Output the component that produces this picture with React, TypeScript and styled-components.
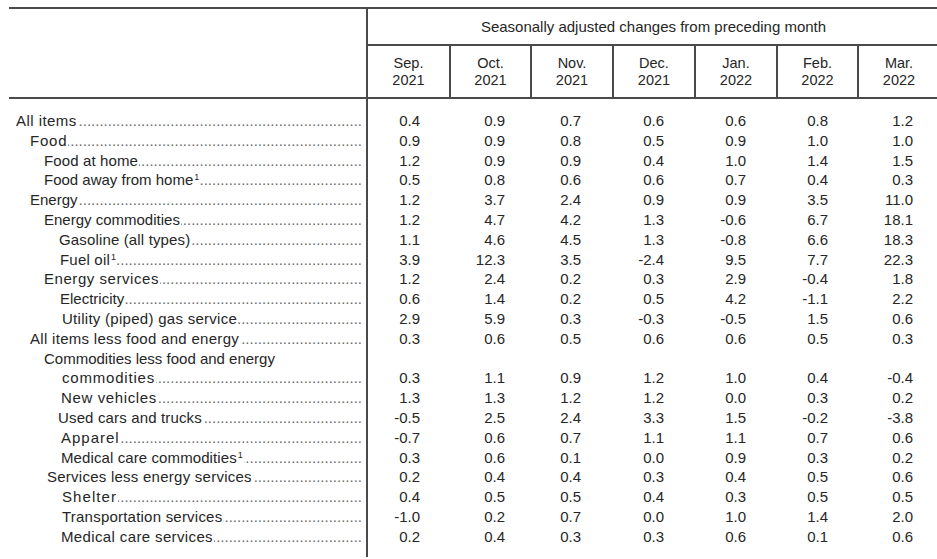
import React from 'react';
import styled, { createGlobalStyle } from 'styled-components';

const LINE = '#4a4a4a';
const INK = '#262626';
const COLS = '359px 81px 81px 82px 82px 82px 81px 82px';

const Global = createGlobalStyle`
  *, *::before, *::after { box-sizing: border-box; }
  html, body { margin: 0; padding: 0; background: #ffffff; overflow: hidden; }
  body {
    font-family: "Liberation Sans", Arial, Helvetica, sans-serif;
    color: ${INK};
  }
`;

const Page = styled.div`
  width: 937px;
  height: 559px;
  overflow: hidden;
  padding: 7px 0 0 9px;
`;

const Table = styled.div`
  width: 930px;
  border-top: 2px solid ${LINE};
`;

const Header = styled.div`
  display: grid;
  grid-template-columns: ${COLS};
  grid-template-rows: 37px 53px;
`;

const Corner = styled.div`
  grid-row: 1 / 3;
  border-right: 2px solid ${LINE};
  border-bottom: 2px solid ${LINE};
`;

const SuperHead = styled.div`
  grid-column: 2 / -1;
  border-bottom: 2px solid ${LINE};
  display: flex;
  align-items: center;
  justify-content: center;
  font-size: 15px;
  white-space: nowrap;
`;

const MonthHead = styled.div<{ $divider: boolean }>`
  border-bottom: 2px solid ${LINE};
  border-left: ${(p) => (p.$divider ? `2px solid ${LINE}` : 'none')};
  display: flex;
  flex-direction: column;
  align-items: center;
  justify-content: center;
  font-size: 14.5px;
  line-height: 17px;
`;

const Body = styled.div`
  display: flex;
  flex-direction: column;
`;

const Row = styled.div<{ $top: number; $bottom: number }>`
  display: grid;
  grid-template-columns: ${COLS};
  & > div {
    padding-top: ${(p) => p.$top}px;
    padding-bottom: ${(p) => p.$bottom}px;
  }
`;

const LabelCell = styled.div<{ $indent: number }>`
  display: flex;
  align-items: baseline;
  padding-left: ${(p) => p.$indent}px;
  padding-right: 4px;
  border-right: 2px solid ${LINE};
  font-size: 15px;
  line-height: 19.8px;
  white-space: nowrap;
  overflow: hidden;
`;

const LabelText = styled.span<{ $ls: number }>`
  flex: none;
  letter-spacing: ${(p) => p.$ls}px;
`;

const Sup = styled.span`
  font-size: 9px;
  line-height: 0;
  vertical-align: 5px;
  margin-left: 1px;
  letter-spacing: 0;
`;

const Leader = styled.span`
  flex: 1 1 auto;
  min-width: 0;
  overflow: hidden;
  direction: rtl;
  white-space: nowrap;
  margin-left: 1px;
  color: #6a6a6a;
  &::before {
    content: '........................................................................................................';
  }
`;

const ValueCell = styled.div<{ $pad: number }>`
  text-align: right;
  padding-right: ${(p) => p.$pad}px;
  font-size: 15px;
  line-height: 19.8px;
  white-space: nowrap;
`;

const MONTHS: [string, string][] = [
  ['Sep.', '2021'],
  ['Oct.', '2021'],
  ['Nov.', '2021'],
  ['Dec.', '2021'],
  ['Jan.', '2022'],
  ['Feb.', '2022'],
  ['Mar.', '2022'],
];

const PADS = [29, 25, 31, 30, 30, 29, 26];

type Item = {
  label: string;
  indent: number;
  ls?: number;
  note?: boolean;
  leader?: boolean;
  values?: string[];
};

const ROWS: Item[] = [
  { label: 'All items', indent: 7, ls: 0.45, values: ['0.4', '0.9', '0.7', '0.6', '0.6', '0.8', '1.2'] },
  { label: 'Food', indent: 21, ls: 0.8, values: ['0.9', '0.9', '0.8', '0.5', '0.9', '1.0', '1.0'] },
  { label: 'Food at home', indent: 35, ls: 0.12, values: ['1.2', '0.9', '0.9', '0.4', '1.0', '1.4', '1.5'] },
  { label: 'Food away from home', indent: 35, note: true, values: ['0.5', '0.8', '0.6', '0.6', '0.7', '0.4', '0.3'] },
  { label: 'Energy', indent: 21, values: ['1.2', '3.7', '2.4', '0.9', '0.9', '3.5', '11.0'] },
  { label: 'Energy commodities', indent: 35, values: ['1.2', '4.7', '4.2', '1.3', '-0.6', '6.7', '18.1'] },
  { label: 'Gasoline (all types)', indent: 50, ls: 0.15, values: ['1.1', '4.6', '4.5', '1.3', '-0.8', '6.6', '18.3'] },
  { label: 'Fuel oil', indent: 51, ls: 0.2, note: true, values: ['3.9', '12.3', '3.5', '-2.4', '9.5', '7.7', '22.3'] },
  { label: 'Energy services', indent: 35, ls: 0.55, values: ['1.2', '2.4', '0.2', '0.3', '2.9', '-0.4', '1.8'] },
  { label: 'Electricity', indent: 51, values: ['0.6', '1.4', '0.2', '0.5', '4.2', '-1.1', '2.2'] },
  { label: 'Utility (piped) gas service', indent: 53, ls: 0.28, values: ['2.9', '5.9', '0.3', '-0.3', '-0.5', '1.5', '0.6'] },
  { label: 'All items less food and energy', indent: 21, ls: 0.3, values: ['0.3', '0.6', '0.5', '0.6', '0.6', '0.5', '0.3'] },
  { label: 'Commodities less food and energy', indent: 35, leader: false },
  { label: 'commodities', indent: 53, ls: 0.8, values: ['0.3', '1.1', '0.9', '1.2', '1.0', '0.4', '-0.4'] },
  { label: 'New vehicles', indent: 52, ls: 0.63, values: ['1.3', '1.3', '1.2', '1.2', '0.0', '0.3', '0.2'] },
  { label: 'Used cars and trucks', indent: 49, ls: 0.15, values: ['-0.5', '2.5', '2.4', '3.3', '1.5', '-0.2', '-3.8'] },
  { label: 'Apparel', indent: 52, ls: 1.0, values: ['-0.7', '0.6', '0.7', '1.1', '1.1', '0.7', '0.6'] },
  { label: 'Medical care commodities', indent: 52, ls: 0.1, note: true, values: ['0.3', '0.6', '0.1', '0.0', '0.9', '0.3', '0.2'] },
  { label: 'Services less energy services', indent: 38, ls: 0.25, values: ['0.2', '0.4', '0.4', '0.3', '0.4', '0.5', '0.6'] },
  { label: 'Shelter', indent: 53, ls: 1.07, values: ['0.4', '0.5', '0.5', '0.4', '0.3', '0.5', '0.5'] },
  { label: 'Transportation services', indent: 53, ls: 0.22, values: ['-1.0', '0.2', '0.7', '0.0', '1.0', '1.4', '2.0'] },
  { label: 'Medical care services', indent: 52, ls: 0.37, values: ['0.2', '0.4', '0.3', '0.3', '0.6', '0.1', '0.6'] },
];

export default function App() {
  return (
    <>
      <Global />
      <Page>
        <Table>
          <Header>
            <Corner />
            <SuperHead>Seasonally adjusted changes from preceding month</SuperHead>
            {MONTHS.map(([m, y], i) => (
              <MonthHead key={m} $divider={i > 0}>
                <span>{m}</span>
                <span>{y}</span>
              </MonthHead>
            ))}
          </Header>
          <Body>
            {ROWS.map((r, idx) => (
              <Row
                key={r.label}
                $top={idx === 0 ? 12 : 0}
                $bottom={idx === ROWS.length - 1 ? 10 : 0}
              >
                <LabelCell $indent={r.indent}>
                  <LabelText $ls={r.ls ?? 0}>
                    {r.label}
                    {r.note && <Sup>1</Sup>}
                  </LabelText>
                  {r.leader !== false && <Leader />}
                </LabelCell>
                {PADS.map((pad, i) => (
                  <ValueCell key={i} $pad={pad}>
                    {r.values ? r.values[i] : ''}
                  </ValueCell>
                ))}
              </Row>
            ))}
          </Body>
        </Table>
      </Page>
    </>
  );
}
